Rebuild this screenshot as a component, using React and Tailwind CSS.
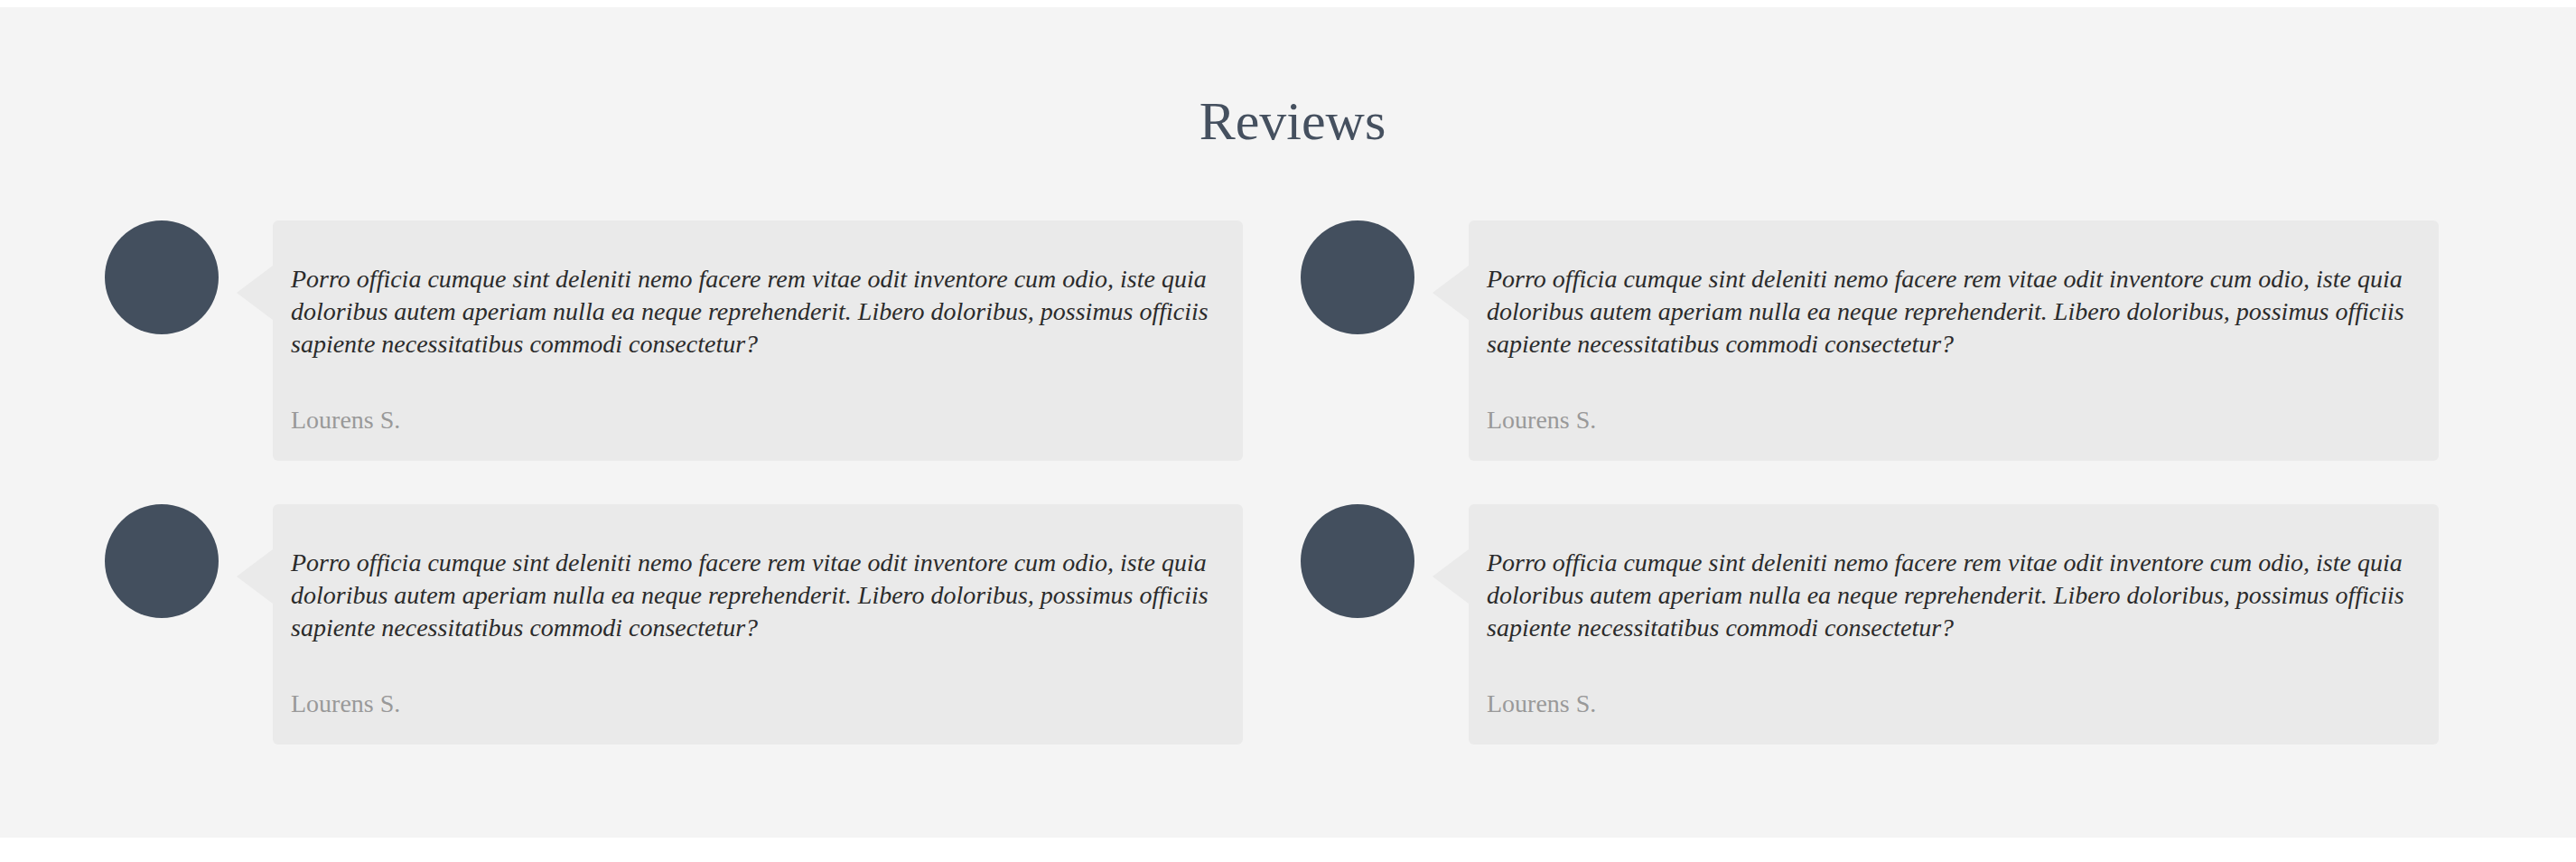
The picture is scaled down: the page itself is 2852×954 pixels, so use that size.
const reviews = [
  { id: 1, name: "Lourens S." },
  { id: 2, name: "Lourens S." },
  { id: 3, name: "Lourens S." },
  { id: 4, name: "Lourens S." },
];

const quote =
  "Porro officia cumque sint deleniti nemo facere rem vitae odit inventore cum odio, iste quia doloribus autem aperiam nulla ea neque reprehenderit. Libero doloribus, possimus officiis sapiente necessitatibus commodi consectetur?";

function ReviewCard({ name }) {
  return (
    <div className="flex items-start gap-[60px]">
      <div className="h-[126px] w-[126px] shrink-0 rounded-full bg-[#434f5e]" />

      <div className="relative flex-1 rounded-md bg-[#eaeaea] pl-5 pr-5 pt-[47px] pb-[27px]">
        {/* little speech arrow */}
        <div className="absolute left-[-40px] top-[50px] h-0 w-0 border-y-[30px] border-r-[40px] border-y-transparent border-r-[#eaeaea]" />

        <p className="text-[28px] italic leading-[36px] text-[#2b2b2b]">{quote}</p>
        <p className="mt-12 text-[28px] leading-[36px] text-[#999999]">{name}</p>
      </div>
    </div>
  );
}

export default function App() {
  return (
    <div className="min-h-screen bg-white pt-2 font-['Liberation_Serif',_'Times_New_Roman',_serif]">
      <section className="bg-[#f4f4f4] pt-[96px] pb-[103px]">
        <h2 className="pl-[10px] text-center text-[60px] leading-none text-[#45505f]">Reviews</h2>

        <div className="mt-20 grid grid-cols-2 gap-x-16 gap-y-12 pl-[116px] pr-[152px]">
          {reviews.map((r) => (
            <ReviewCard key={r.id} name={r.name} />
          ))}
        </div>
      </section>
    </div>
  );
}
